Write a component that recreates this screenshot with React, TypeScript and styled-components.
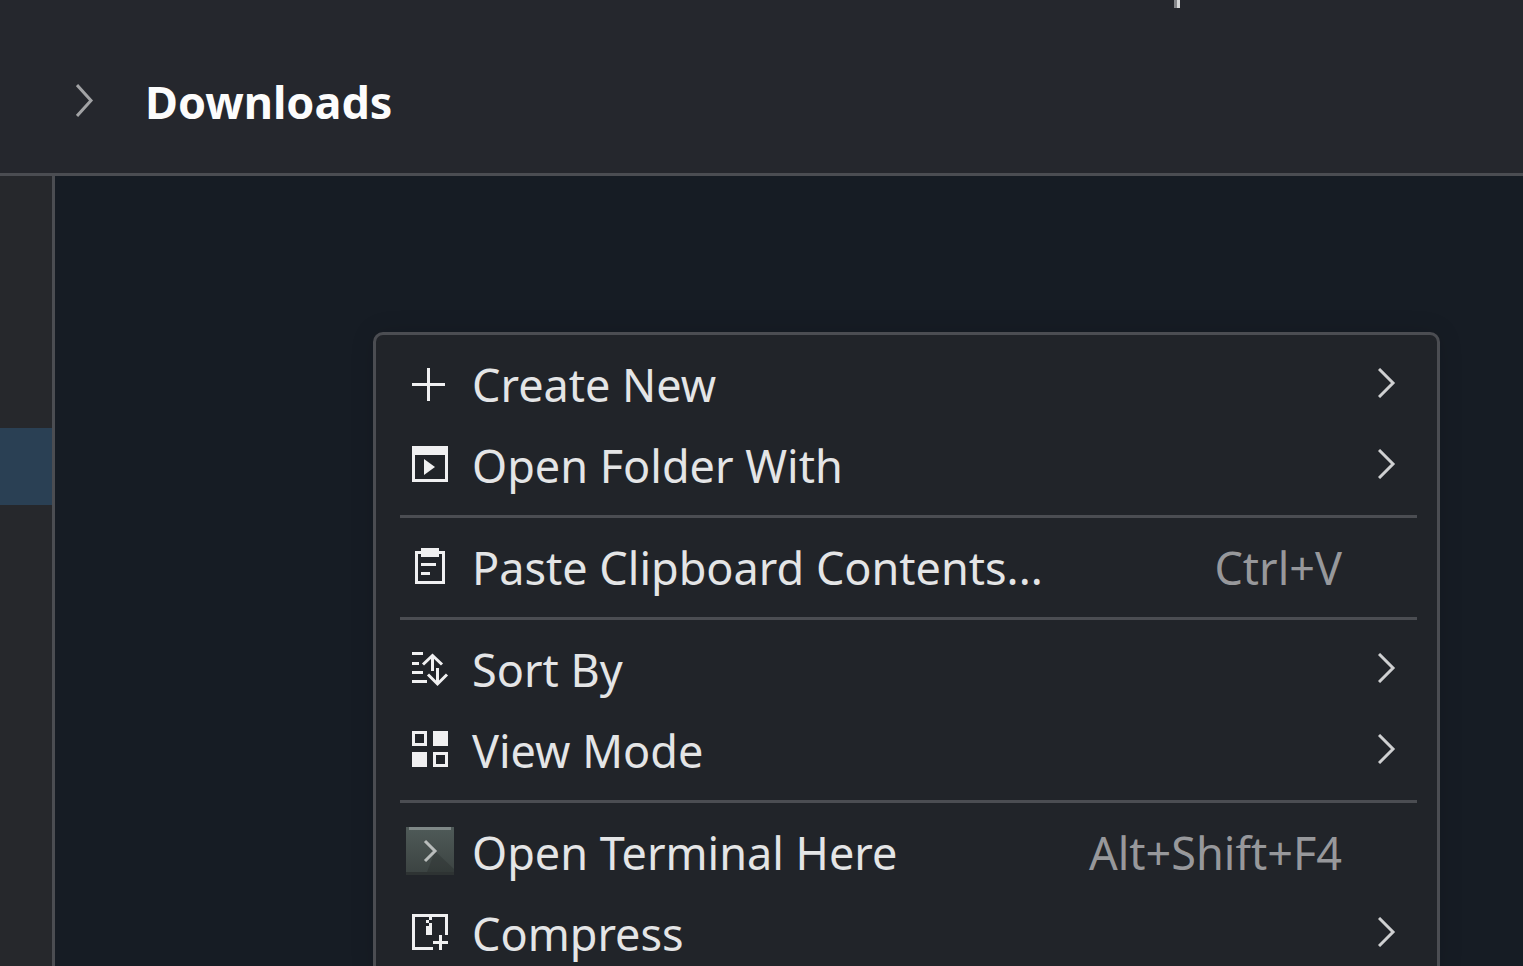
import React from "react";
import styled, { createGlobalStyle } from "styled-components";

const GlobalStyle = createGlobalStyle`
  html, body {
    margin: 0;
    height: 100%;
    overflow: hidden;
    background: #161c24;
  }
  #root {
    height: 100%;
  }
`;

const Page = styled.div`
  height: 966px;
  display: flex;
  flex-direction: column;
  font-family: "Noto Sans", "Open Sans", sans-serif;
  overflow: hidden;
`;

const Toolbar = styled.header`
  position: relative;
  flex: none;
  box-sizing: border-box;
  height: 176px;
  padding: 27px 0 0 76px;
  display: flex;
  align-items: center;
  gap: 52px;
  background: #25272d;
  border-bottom: 3px solid #4b4d52;
`;

/* bit of a splitter poking in from the top edge */
const Tick = styled.span`
  position: absolute;
  top: 0;
  left: 1174px;
  width: 6px;
  height: 8px;
  background: linear-gradient(to right, #85868a 50%, #d6d7d8 50%);
`;

const Title = styled.h1`
  margin: 4px 0 0 -1px;
  font-size: 45px;
  line-height: 56px;
  font-weight: 700;
  color: #fcfcfc;
`;

const Body = styled.div`
  position: relative;
  flex: 1;
  display: flex;
  min-height: 0;
`;

const Sidebar = styled.aside`
  flex: none;
  box-sizing: content-box;
  width: 52px;
  padding-top: 252px;
  background: #26282c;
  border-right: 3px solid #4b4d52;
`;

const SidebarActive = styled.div`
  height: 77px;
  background: #2a4054;
`;

const Content = styled.main`
  flex: 1;
  background: #161c24;
`;

const Menu = styled.div`
  position: absolute;
  left: 373px;
  top: 156px;
  box-sizing: border-box;
  width: 1067px;
  padding-top: 10px;
  background: #212429;
  border: 3px solid #4b4d52;
  border-radius: 10px;
  box-shadow: 0 0 24px rgba(0, 0, 0, 0.12);
`;

const Row = styled.div`
  height: 81px;
  box-sizing: border-box;
  padding: 0 41px 0 30px;
  display: flex;
  align-items: flex-start;
`;

const Glyph = styled.svg<{ $top?: number }>`
  flex: none;
  display: block;
  width: 48px;
  height: 48px;
  margin-top: ${(p) => p.$top ?? 16}px;
  color: #f0f0f1;
`;

const Label = styled.span`
  flex: 1;
  margin-left: 18px;
  margin-top: -1px;
  font-size: 45px;
  line-height: 81px;
  color: #e4e5e6;
  white-space: nowrap;
`;

const Shortcut = styled.span`
  margin-top: -1px;
  margin-right: 36px;
  font-size: 45px;
  line-height: 81px;
  color: #97989b;
  white-space: nowrap;
`;

const ArrowSlot = styled.span`
  flex: none;
  width: 18px;
  height: 30px;
  margin-top: 23px;
`;

const Chevron = styled.svg`
  display: block;
  width: 18px;
  height: 30px;
  color: #cfd0d1;
`;

const BarChevron = styled(Chevron)`
  height: 33px;
  color: #a2a3a5;
`;

const Separator = styled.hr`
  height: 3px;
  margin: 8px 20px 10px 24px;
  border: 0;
  background: #4b4d52;
`;

const Arrow = () => (
  <ArrowSlot>
    <Chevron viewBox="0 0 18 30" fill="none" stroke="currentColor" strokeWidth="3">
      <path d="M1 1 L15 15 L1 29" />
    </Chevron>
  </ArrowSlot>
);

const icon = { viewBox: "0 0 48 48", fill: "currentColor" };

const PlusIcon = () => (
  <Glyph {...icon} $top={17}>
    <path d="M21 6h3v15h15v3H24v15h-3V24H6v-3h15z" />
  </Glyph>
);

const OpenWithIcon = () => (
  <Glyph {...icon} $top={17}>
    <path fillRule="evenodd" d="M6 3h36v36H6zM9 12v24h30V12z" />
    <path d="M18 16l11 8-11 8z" />
  </Glyph>
);

const ClipboardIcon = () => (
  <Glyph {...icon}>
    <path fillRule="evenodd" d="M9 7h6V4h18v3h6v33H9zM12 10v27h24V10z" />
    <path d="M15 9h18v4H15zM15 19h15v3H15zM15 28h9v3H15z" />
  </Glyph>
);

const SortIcon = () => (
  <Glyph {...icon}>
    <path d="M6 6h11v3H6zM6 16h7v3H6zM6 25h11v3H6zM6 34h15v3H6z" />
    <g fill="none" stroke="currentColor" strokeWidth="3">
      <path d="M26.5 25V10M17 18.5l9.5-9 9.5 9" />
      <path d="M31.5 22v15M22 28.5l9.5 9.5 9.5-9.5" />
    </g>
  </Glyph>
);

const ViewModeIcon = () => (
  <Glyph {...icon}>
    <path fillRule="evenodd" d="M6 4h15v15H6zM9 7v9h9V7z" />
    <path d="M27 4h15v15H27zM6 25h15v15H6z" />
    <path fillRule="evenodd" d="M27 25h15v15H27zM30 28v9h9v-9z" />
  </Glyph>
);

const TerminalIcon = () => (
  <Glyph viewBox="0 0 48 48" $top={14}>
    <defs>
      <linearGradient id="termBg" x1="0" y1="0" x2="0" y2="1">
        <stop offset="0" stopColor="#4f5a58" />
        <stop offset="1" stopColor="#3b4241" />
      </linearGradient>
    </defs>
    <rect width="48" height="48" fill="url(#termBg)" />
    <rect x="3" width="42" height="3" fill="#7f8887" />
    <rect y="45" width="48" height="3" fill="#2e3333" />
    <path d="M29 24L48 42v3H21z" fill="#000" opacity="0.14" />
    <path d="M19 14l10 10-10 10" fill="none" stroke="#b9bdbc" strokeWidth="3" />
  </Glyph>
);

const CompressIcon = () => (
  <Glyph {...icon}>
    <path d="M6 4h36v21h-3V7H9v30h18v3H6z" />
    <path d="M23 7h3v3h-3zM20 10h3v3h-3zM23 13h3v3h-3zM20 16h6v3h-6zM20 19h6v3h-6zM20 22h6v3h-6z" />
    <path d="M33 25h3v6h6v3h-6v6h-3v-6h-6v-3h6z" />
  </Glyph>
);

export default function App() {
  return (
    <Page>
      <GlobalStyle />
      <Toolbar>
        <Tick />
        <BarChevron viewBox="0 0 18 33" fill="none" stroke="currentColor" strokeWidth="3">
          <path d="M1 1 L15 16.5 L1 32" />
        </BarChevron>
        <Title>Downloads</Title>
      </Toolbar>

      <Body>
        <Sidebar>
          <SidebarActive />
        </Sidebar>
        <Content />

        {/* Menu de contexto */}
        <Menu>
          <Row>
            <PlusIcon />
            <Label>Create New</Label>
            <Arrow />
          </Row>
          <Row>
            <OpenWithIcon />
            <Label>Open Folder With</Label>
            <Arrow />
          </Row>
          <Separator />
          <Row>
            <ClipboardIcon />
            <Label>Paste Clipboard Contents...</Label>
            <Shortcut>Ctrl+V</Shortcut>
            <ArrowSlot />
          </Row>
          <Separator />
          <Row>
            <SortIcon />
            <Label>Sort By</Label>
            <Arrow />
          </Row>
          <Row>
            <ViewModeIcon />
            <Label>View Mode</Label>
            <Arrow />
          </Row>
          <Separator />
          <Row>
            <TerminalIcon />
            <Label>Open Terminal Here</Label>
            <Shortcut>Alt+Shift+F4</Shortcut>
            <ArrowSlot />
          </Row>
          <Row>
            <CompressIcon />
            <Label>Compress</Label>
            <Arrow />
          </Row>
        </Menu>
      </Body>
    </Page>
  );
}
